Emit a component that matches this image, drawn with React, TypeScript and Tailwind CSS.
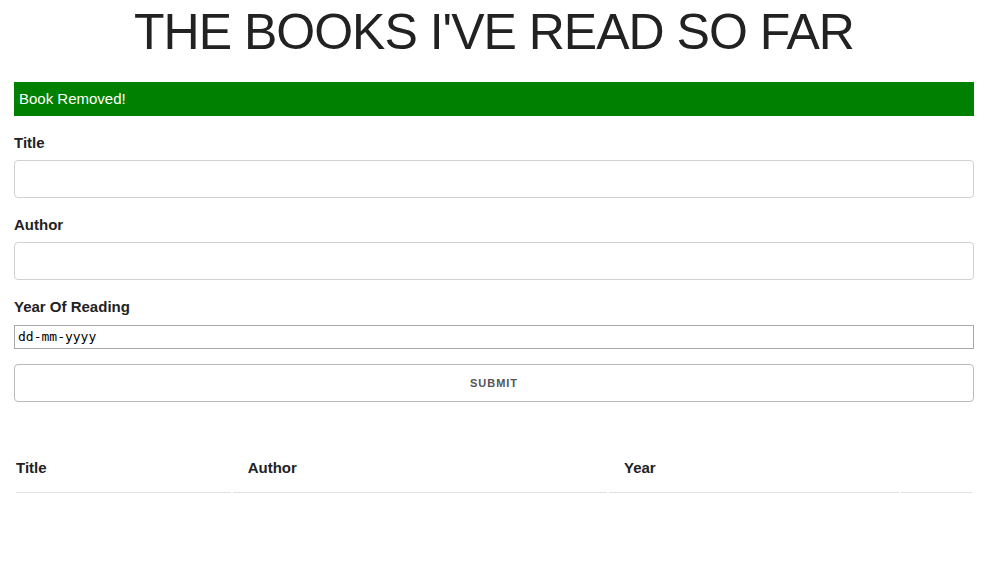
import React from 'react';

type FieldProps = {
  id: string;
  label: string;
};

function TextField({ id, label }: FieldProps) {
  return (
    <div className="mb-[15px]">
      <label htmlFor={id} className="mb-[5px] block font-semibold">
        {label}
      </label>
      <input
        id={id}
        type="text"
        className="block h-[38px] w-full rounded border border-[#d1d1d1] bg-white px-[10px] py-[6px] outline-none focus:border-[#33c3f0]"
      />
    </div>
  );
}

function BookForm() {
  return (
    <form onSubmit={(event) => event.preventDefault()} className="mb-10">
      <TextField id="title" label="Title" />
      <TextField id="author" label="Author" />
      <div className="mb-[15px]">
        <label htmlFor="year" className="mb-[6px] block font-semibold">
          Year Of Reading
        </label>
        <input
          id="year"
          type="text"
          placeholder="dd-mm-yyyy"
          className="block h-6 w-full border border-[#a9a9a9] bg-white px-[3px] font-['DejaVu_Sans_Mono',monospace] text-[13px] placeholder:text-black"
        />
      </div>
      <button
        type="submit"
        className="block h-[38px] w-full cursor-pointer rounded border border-[#bbbbbb] bg-transparent text-center text-[11px] font-semibold tracking-[1px] text-[#555555] uppercase"
      >
        Submit
      </button>
    </form>
  );
}

function BookTable() {
  const cell = 'border-b border-[#e1e1e1] px-[15px] py-3 text-left font-bold';
  return (
    <table className="w-full table-fixed border-separate border-spacing-[2px]">
      <colgroup>
        <col className="w-[22.6%]" />
        <col className="w-[39.4%]" />
        <col className="w-[30.5%]" />
        <col />
      </colgroup>
      <thead>
        <tr>
          <th className="border-b border-[#e1e1e1] py-3 pr-[15px] text-left font-bold">Title</th>
          <th className={cell}>Author</th>
          <th className={cell}>Year</th>
          <th className="border-b border-[#e1e1e1] py-3" />
        </tr>
      </thead>
      <tbody />
    </table>
  );
}

export default function App() {
  return (
    <div className="min-h-screen bg-white pr-[13px] font-['Liberation_Sans',Arial,sans-serif] text-[15px] leading-6 text-[#222222]">
      <main className="mx-auto w-full max-w-[960px] pt-[2px]">
        <h1 className="mb-5 text-center text-[50px] leading-[60px] font-light tracking-[-1px] uppercase">
          The Books I've Read So Far
        </h1>
        <div role="status" className="mb-[15px] bg-[#008000] p-[5px] text-white">
          Book Removed!
        </div>
        <BookForm />
        <BookTable />
      </main>
    </div>
  );
}
